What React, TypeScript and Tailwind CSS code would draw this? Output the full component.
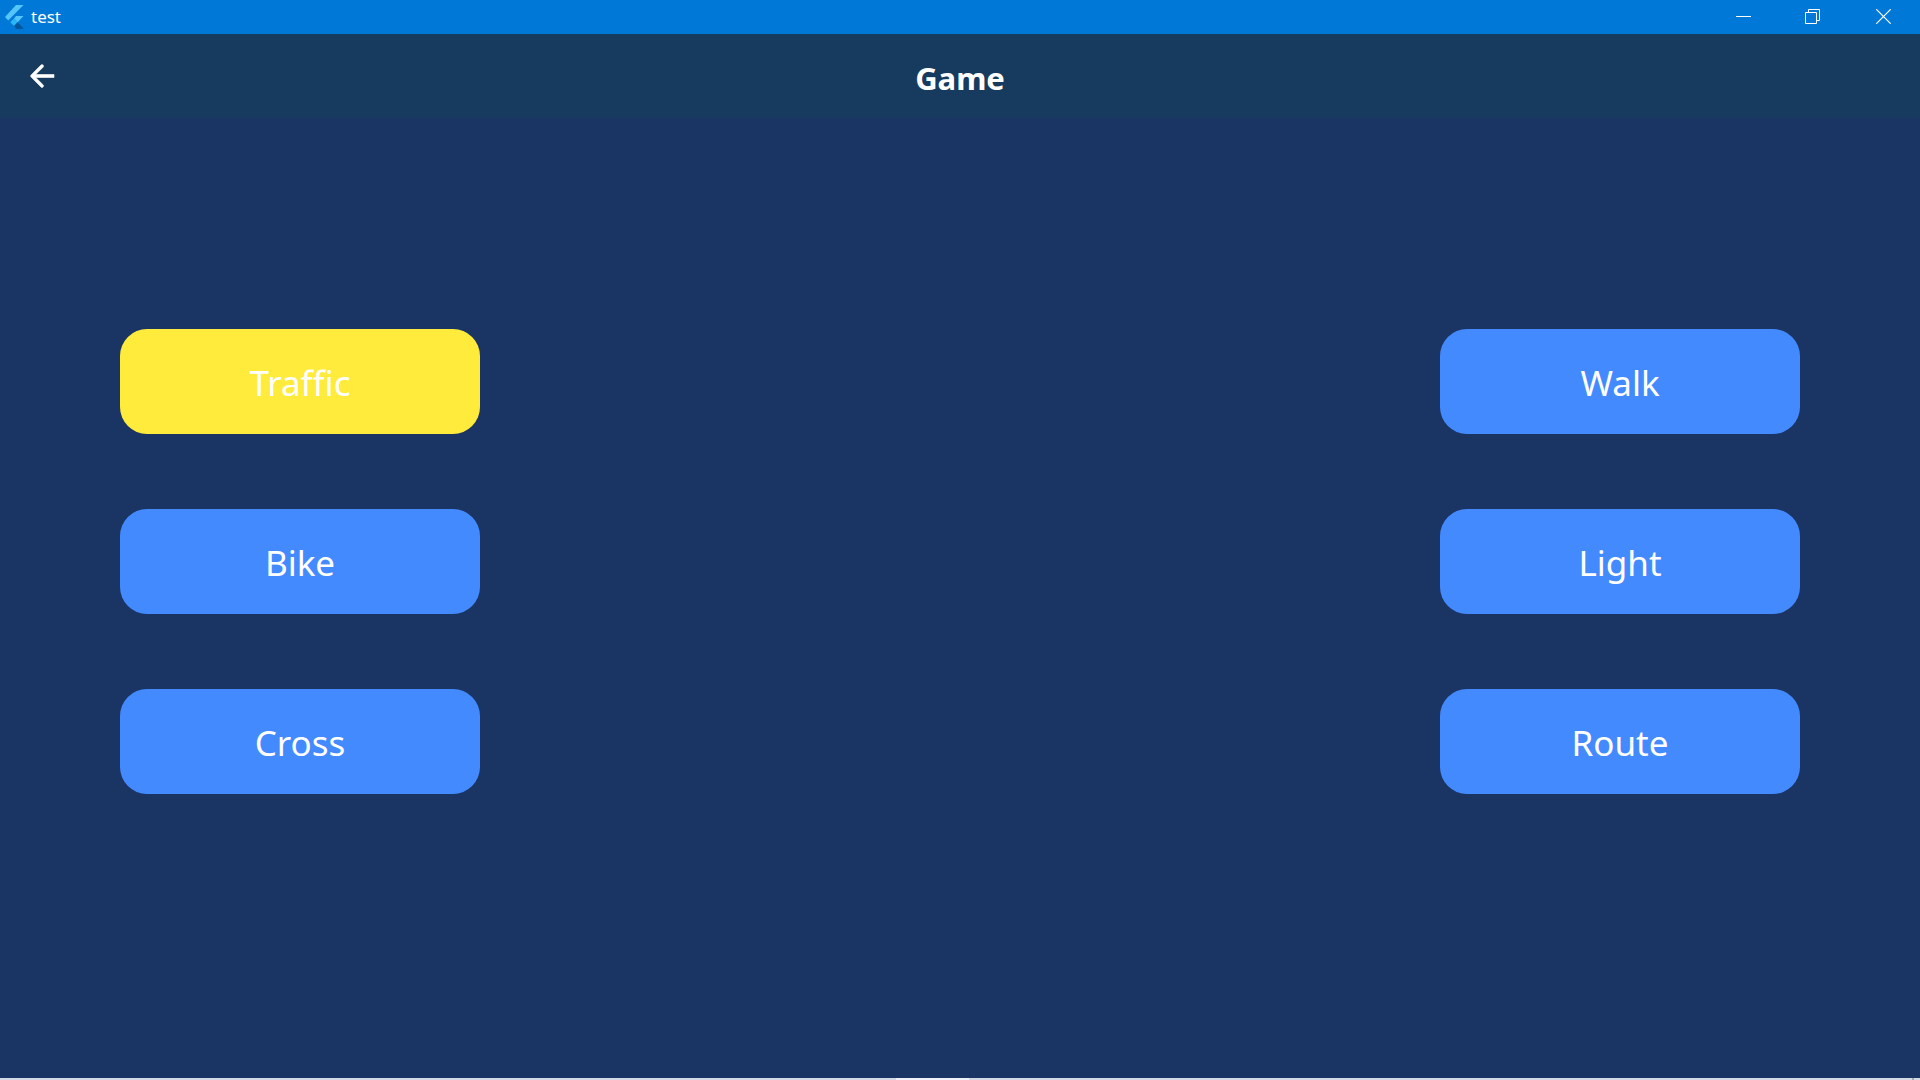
import React from "react";

const LEFT = ["Traffic", "Bike", "Cross"];
const RIGHT = ["Walk", "Light", "Route"];

function FlutterLogo() {
  return (
    <svg width="19" height="24" viewBox="0 0 19 24" aria-hidden="true">
      <path d="M11 0H18.5L3.2 15.5L0 12Z" fill="#54c5f8" />
      <path d="M11 11H18.5L12.7 17.2L9 13.5Z" fill="#54c5f8" />
      <path d="M9 13.5L12.7 17.2L9 21L5.2 17.2Z" fill="#29b6f6" />
      <path d="M9 21L12.7 17.2L19 24H11.5Z" fill="#01579b" />
    </svg>
  );
}

function CaptionButton({ label, width, children }: { label: string; width: string; children: React.ReactNode }) {
  return (
    <button type="button" aria-label={label} className={`flex h-[33px] items-center justify-center ${width}`}>
      <svg width="15" height="15" viewBox="0 0 15 15" fill="none" stroke="#fff" aria-hidden="true">
        {children}
      </svg>
    </button>
  );
}

function Column({ words, selected }: { words: string[]; selected?: string }) {
  return (
    <div className="flex w-[360px] flex-col gap-[75px]">
      {words.map((word) => (
        <button
          key={word}
          type="button"
          className={`h-[105px] rounded-[27px] pt-1 text-[35px] ${word === selected ? "bg-[#ffeb3b]" : "bg-[#448aff]"}`}
        >
          {word}
        </button>
      ))}
    </div>
  );
}

export default function App() {
  return (
    <div className="flex min-h-screen flex-col bg-[#1a3564] font-['Segoe_UI','Noto_Sans',sans-serif] text-white">
      <div className="flex h-[34px] items-center justify-between bg-[#0078d7]">
        <div className="flex items-center gap-[7px] pl-[5px]">
          <FlutterLogo />
          <span className="text-[17px]">test</span>
        </div>
        <div className="flex h-full">
          <CaptionButton label="Minimize" width="w-[69px]">
            <path d="M0 7.5H15" />
          </CaptionButton>
          <CaptionButton label="Restore" width="w-[69px]">
            <path d="M.5 3.5H11.5V14.5H.5ZM3.5 3.5V.5H14.5V11.5H11.5" />
          </CaptionButton>
          <CaptionButton label="Close" width="w-[73px]">
            <path d="M.3 .3L14.7 14.7M14.7 .3L.3 14.7" strokeWidth="1.2" />
          </CaptionButton>
        </div>
      </div>
      <header className="grid h-[84px] grid-cols-[1fr_auto_1fr] items-center bg-[#173b5e]">
        <button type="button" aria-label="Back" className="ml-6 flex size-9 items-center justify-center">
          <svg width="36" height="36" viewBox="0 0 24 24" fill="#fff" stroke="#fff" strokeWidth="0.4" aria-hidden="true">
            <path d="M20 11H7.83l4.88-4.88c.39-.39.39-1.03 0-1.42a.996.996 0 0 0-1.41 0l-6.59 6.59a.996.996 0 0 0 0 1.41l6.59 6.59a.996.996 0 1 0 1.41-1.41L7.83 13H20z" />
          </svg>
        </button>
        <h1 className="pt-1 text-[31px] font-bold">Game</h1>
      </header>
      <main className="flex flex-1 justify-between px-[120px] pt-[211px]">
        <Column words={LEFT} selected="Traffic" />
        <Column words={RIGHT} />
      </main>
      <footer className="grid h-0.5 grid-cols-[896fr_73fr_943fr_2fr_6fr] bg-[#d3dae6]">
        <div className="col-start-2 bg-[#eff2f8]" />
        <div className="col-start-4 bg-[#a3a8b2]" />
      </footer>
    </div>
  );
}
